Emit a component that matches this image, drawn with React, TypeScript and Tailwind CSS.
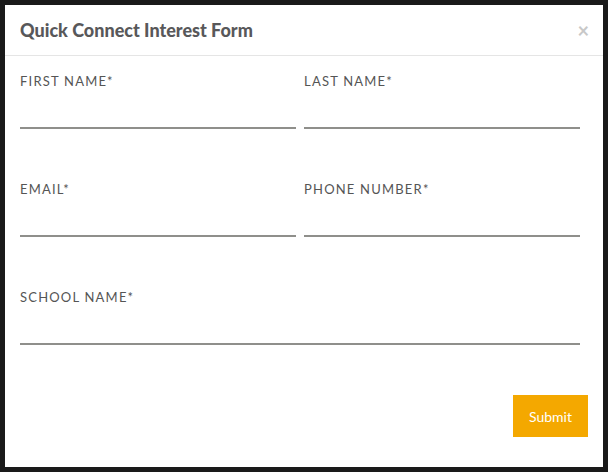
export default function App() {
  const rows: string[][] = [
    ["FIRST NAME*", "LAST NAME*"],
    ["EMAIL*", "PHONE NUMBER*"],
    ["SCHOOL NAME*"],
  ];

  return (
    <div className="h-[472px] w-[608px] bg-[#1a1a1a] p-[5px] font-['Lato',sans-serif]">
      <div className="flex h-[462px] w-[598px] flex-col bg-white">
        {/* Header */}
        <div className="flex h-[51px] items-center justify-between border-b border-[#e5e5e5] pl-[15px] pr-[14px]">
          <h2 className="text-[18px] font-black text-[#58585a]">Quick Connect Interest Form</h2>
          <button className="text-[20px] leading-none font-bold text-[#c8c8c8]">×</button>
        </div>

        {/* Fields */}
        <div className="flex flex-col gap-[52px] pl-[15px] pr-[23px] pt-[17px]">
          {rows.map((row, i) => (
            <div key={i} className="grid grid-cols-2 gap-x-[8px]">
              {row.map((label) => (
                <div key={label} className={row.length === 1 ? "col-span-2" : ""}>
                  <label className="block text-[13px] leading-[16px] tracking-[1.2px] text-[#555]">
                    {label}
                  </label>
                  <input className="block h-[40px] w-full border-b-2 border-[#8f8f8b] outline-none" />
                </div>
              ))}
            </div>
          ))}
        </div>

        {/* Footer */}
        <div className="flex justify-end px-[15px] pt-[50px]">
          <button className="h-[42px] w-[75px] bg-[#f4a800] text-[14px] text-white">
            Submit
          </button>
        </div>
      </div>
    </div>
  );
}
